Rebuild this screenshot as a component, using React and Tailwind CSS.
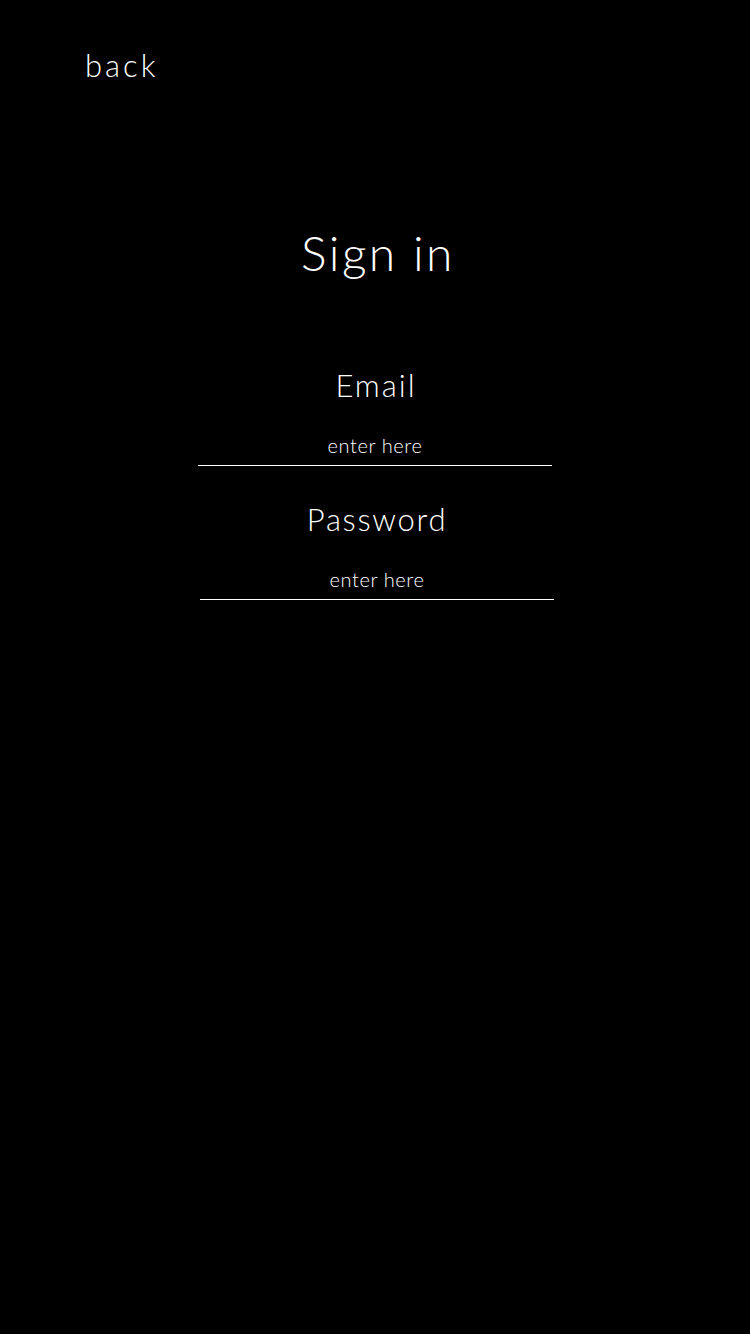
export default function App() {
  return (
    <div className="min-h-[1334px] w-full bg-black text-white" style={{ fontFamily: 'Lato, "Liberation Sans", sans-serif' }}>
      <div className="pl-[85px] pt-[50px]">
        <button className="text-[31px] leading-none font-light tracking-[3px]">back</button>
      </div>

      <h1 className="mt-[146px] text-center text-[48px] leading-none font-light pl-[6px] tracking-[2.4px]">Sign in</h1>

      <form className="mt-[93px] flex flex-col">
        <div className="ml-[198px] w-[354px] flex flex-col items-center">
          <label className="text-[31px] leading-none font-light tracking-[2px] pl-[2px]">Email</label>
          <div className="mt-[34px] w-full border-b border-white pb-[10px] text-center text-[20px] leading-none font-light tracking-[0.6px]">
            enter here
          </div>
        </div>
        <div className="ml-[200px] mt-[38px] w-[354px] flex flex-col items-center">
          <label className="text-[31px] leading-none font-light tracking-[1.7px]">Password</label>
          <div className="mt-[34px] w-full border-b border-white pb-[10px] text-center text-[20px] leading-none font-light tracking-[0.6px]">
            enter here
          </div>
        </div>
      </form>
    </div>
  );
}
